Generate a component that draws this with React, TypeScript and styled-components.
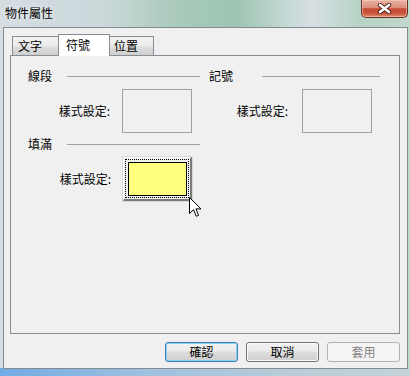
import React from "react";
import styled, { createGlobalStyle } from "styled-components";

const GlobalStyle = createGlobalStyle`
  html, body {
    margin: 0;
    padding: 0;
  }
  body {
    font-family: "Noto Sans CJK TC", "Liberation Sans", sans-serif;
    font-size: 12px;
    color: #000;
  }
`;

const Window = styled.div`
  position: relative;
  width: 410px;
  height: 376px;
  display: flex;
  flex-direction: column;
  overflow: hidden;
  background:
    linear-gradient(90deg, #72abe4 0%, #9fc0df 35%, #b9ccd8 70%, #c3d3d8 100%) bottom / 100% 8px no-repeat,
    linear-gradient(90deg, #d5dde2 0%, #cbd8da 25%, #a6c9b8 45%, #9fc5b2 58%, #c4d8d5 70%, #d7e0e4 76%, #b5d3c5 88%, #c2d8cd 100%);
`;

const TitleBar = styled.div`
  height: 27px;
  flex-shrink: 0;
  display: flex;
  justify-content: space-between;
  align-items: flex-start;
`;

const Title = styled.div`
  padding: 5px 0 0 5px;
  line-height: 16px;
  font-size: 12px;
  text-shadow: 0 0 5px rgba(255, 255, 255, 0.9);
`;

const CloseButton = styled.div`
  box-sizing: border-box;
  width: 47px;
  height: 18px;
  margin-right: 2px;
  border: 1px solid #6b3128;
  border-top: none;
  border-radius: 0 0 5px 5px;
  background: linear-gradient(#e9b2a3 0%, #dc8e7d 45%, #c44a33 52%, #c9553c 78%, #e0926c 100%);
  box-shadow: inset 0 0 0 1px rgba(255, 220, 200, 0.45);
  display: flex;
  align-items: center;
  justify-content: center;
`;

const Client = styled.div`
  flex: 1;
  margin: 0 2px 7px 3px;
  border: 1px solid #838b91;
  background: #f0f0f0;
  padding: 6px 7px 6px 6px;
  display: flex;
  flex-direction: column;
`;

const TabStrip = styled.div`
  position: relative;
  z-index: 1;
  height: 22px;
  margin-bottom: -1px;
  padding-left: 2px;
  display: flex;
  align-items: flex-end;
`;

const Tab = styled.div<{ $w: number; $active?: boolean; $pad: number }>`
  box-sizing: border-box;
  width: ${(p) => p.$w}px;
  height: ${(p) => (p.$active ? 22 : 19)}px;
  margin-right: -1px;
  margin-bottom: ${(p) => (p.$active ? 0 : 1)}px;
  padding: ${(p) => (p.$active ? "1px 0 0" : "0")} ${(p) => p.$pad}px;
  border: 1px solid #898c95;
  border-bottom: none;
  background: ${(p) => (p.$active ? "#fff" : "linear-gradient(#f3f3f3 0%, #ebebeb 50%, #dddddd 55%, #cfcfcf 100%)")};
  line-height: 17px;
  font-size: 12px;
  position: relative;
  z-index: ${(p) => (p.$active ? 2 : 1)};
`;

const Panel = styled.div`
  box-sizing: border-box;
  height: 279px;
  border: 1px solid #898c95;
  background: #f0f0f0;
  padding: 12px 19px 0 17px;
  display: grid;
  grid-template-columns: 172px 171px;
  column-gap: 9px;
  align-content: start;
`;

const GroupHeader = styled.div<{ $labelW: number; $top?: number }>`
  display: flex;
  align-items: center;
  height: 16px;
  margin-top: ${(p) => p.$top ?? 0}px;
  line-height: 16px;

  & > span {
    width: ${(p) => p.$labelW}px;
    flex-shrink: 0;
  }
`;

const Rule = styled.div`
  flex: 1;
  border-top: 1px solid #a0a0a0;
`;

const StyleRow = styled.div<{ $gap: number }>`
  display: flex;
  justify-content: flex-end;
  align-items: center;
  gap: ${(p) => p.$gap}px;
  height: 44px;
  margin-top: 5px;
  padding-right: 8px;
  line-height: 16px;
`;

const EmptyBox = styled.div`
  box-sizing: border-box;
  width: 70px;
  height: 44px;
  border: 1px solid #a0a0a0;
`;

const FillButton = styled.div`
  box-sizing: border-box;
  width: 69px;
  height: 44px;
  border-top: 1px solid #fff;
  border-left: 1px solid #fff;
  border-right: 2px solid #7a7a7a;
  border-bottom: 2px solid #7a7a7a;
  box-shadow: 0 0 0 1px #d8d8d8;
  background: #f0f0f0;
  padding: 1px 1px 1px 1px;
`;

const FocusRect = styled.div`
  box-sizing: border-box;
  height: 100%;
  border: 1px dotted #000;
  padding: 2px 1px 1px 2px;
`;

const Swatch = styled.div<{ $color: string }>`
  box-sizing: border-box;
  height: 100%;
  border: 1px solid #000;
  background: ${(p) => p.$color};
`;

const Footer = styled.div`
  display: flex;
  justify-content: flex-end;
  gap: 8px;
  margin-top: 8px;
`;

const DialogButton = styled.div<{ $kind: "default" | "normal" | "disabled" }>`
  box-sizing: border-box;
  width: 73px;
  height: 20px;
  border-radius: 3px;
  text-align: center;
  line-height: 18px;
  font-size: 12px;
  border: 1px solid
    ${(p) => (p.$kind === "default" ? "#3c7fb1" : p.$kind === "normal" ? "#707070" : "#adb2b5")};
  color: ${(p) => (p.$kind === "disabled" ? "#838383" : "#000")};
  background: ${(p) =>
    p.$kind === "disabled"
      ? "#f4f4f4"
      : "linear-gradient(#f2f2f2 0%, #ebebeb 45%, #dddddd 50%, #cfcfcf 100%)"};
  box-shadow: ${(p) =>
    p.$kind === "default"
      ? "inset 0 0 0 1px #8fd0f6"
      : p.$kind === "normal"
      ? "inset 0 0 0 1px #fcfcfc"
      : "none"};
`;

const Cursor = styled.svg`
  position: absolute;
  left: 189px;
  top: 197px;
`;

function App() {
  return (
    <>
      <GlobalStyle />
      <Window>
        <TitleBar>
          <Title>物件屬性</Title>
          <CloseButton>
            <svg width="15" height="11" viewBox="0 0 15 11">
              <path d="M3 2 L12 9 M12 2 L3 9" stroke="#4a1d16" strokeWidth="4.4" strokeLinecap="round" />
              <path d="M3 2 L12 9 M12 2 L3 9" stroke="#fff" strokeWidth="2.6" strokeLinecap="round" />
            </svg>
          </CloseButton>
        </TitleBar>
        <Client>
          <TabStrip>
            <Tab $w={47} $pad={5}>文字</Tab>
            <Tab $w={52} $pad={7} $active>符號</Tab>
            <Tab $w={45} $pad={4}>位置</Tab>
          </TabStrip>
          <Panel>
            <GroupHeader $labelW={39}>
              <span>線段</span>
              <Rule />
            </GroupHeader>
            <GroupHeader $labelW={53}>
              <span>記號</span>
              <Rule />
            </GroupHeader>
            <StyleRow $gap={12}>
              <span>樣式設定:</span>
              <EmptyBox />
            </StyleRow>
            <StyleRow $gap={14}>
              <span>樣式設定:</span>
              <EmptyBox />
            </StyleRow>
            <GroupHeader $labelW={39} $top={3}>
              <span>填滿</span>
              <Rule />
            </GroupHeader>
            <div />
            <StyleRow $gap={12}>
              <span>樣式設定:</span>
              <FillButton>
                <FocusRect>
                  <Swatch $color="#ffff80" />
                </FocusRect>
              </FillButton>
            </StyleRow>
          </Panel>
          <Footer>
            <DialogButton $kind="default">確認</DialogButton>
            <DialogButton $kind="normal">取消</DialogButton>
            <DialogButton $kind="disabled">套用</DialogButton>
          </Footer>
        </Client>
        <Cursor width="14" height="21" viewBox="0 0 14 21">
          <path
            d="M0.5 0.5 L0.5 16.5 L4.5 12.7 L7.3 19.3 L9.6 18.3 L6.9 11.9 L12 11.9 Z"
            fill="#fff"
            stroke="#000"
            strokeWidth="1"
            strokeLinejoin="miter"
          />
        </Cursor>
      </Window>
    </>
  );
}

export default App;
